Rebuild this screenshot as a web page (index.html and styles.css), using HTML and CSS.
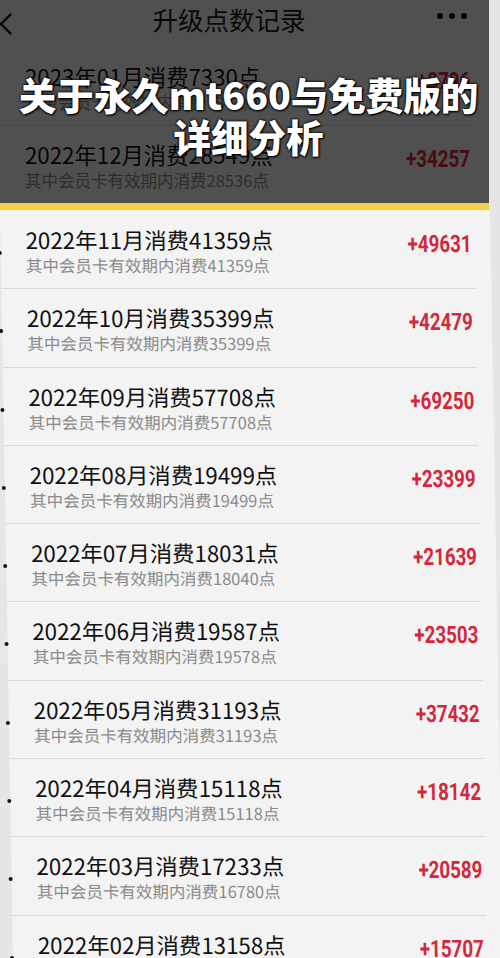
FILE: index.html
```html
<!DOCTYPE html>
<html lang="zh-CN">
<head>
    <meta charset="UTF-8">
    <meta name="viewport" content="width=device-width, initial-scale=1.0">
    <title>升级点数记录</title>
    <link rel="stylesheet" href="styles.css">
</head>
<body>
    <div class="phone">
        <div class="top">
            <div class="header">
                <svg class="back" width="14" height="24" viewBox="0 0 14 24">
                    <polyline points="12,2 2,12 12,22" fill="none" stroke="#111" stroke-width="2.4"/>
                </svg>
                <span class="header-title">升级点数记录</span>
                <span class="more"><i></i><i></i><i></i></span>
            </div>
            <div class="row">
                <div class="info">
                    <p class="month">2023年01月消费7330点</p>
                    <p class="sub">其中会员卡有效期内消费7343点</p>
                </div>
                <span class="points">+8796</span>
            </div>
            <div class="row">
                <div class="info">
                    <p class="month">2022年12月消费28549点</p>
                    <p class="sub">其中会员卡有效期内消费28536点</p>
                </div>
                <span class="points">+34257</span>
            </div>

            <div class="overlay">
                <h1>关于永久mt660与免费版的<br>详细分析</h1>
            </div>
        </div>

        <div class="bar"></div>

        <div class="list">
            <div class="row">
                <div class="info">
                    <p class="month">2022年11月消费41359点</p>
                    <p class="sub">其中会员卡有效期内消费41359点</p>
                </div>
                <span class="points">+49631</span>
            </div>
            <div class="row">
                <div class="info">
                    <p class="month">2022年10月消费35399点</p>
                    <p class="sub">其中会员卡有效期内消费35399点</p>
                </div>
                <span class="points">+42479</span>
            </div>
            <div class="row">
                <div class="info">
                    <p class="month">2022年09月消费57708点</p>
                    <p class="sub">其中会员卡有效期内消费57708点</p>
                </div>
                <span class="points">+69250</span>
            </div>
            <div class="row">
                <div class="info">
                    <p class="month">2022年08月消费19499点</p>
                    <p class="sub">其中会员卡有效期内消费19499点</p>
                </div>
                <span class="points">+23399</span>
            </div>
            <div class="row">
                <div class="info">
                    <p class="month">2022年07月消费18031点</p>
                    <p class="sub">其中会员卡有效期内消费18040点</p>
                </div>
                <span class="points">+21639</span>
            </div>
            <div class="row">
                <div class="info">
                    <p class="month">2022年06月消费19587点</p>
                    <p class="sub">其中会员卡有效期内消费19578点</p>
                </div>
                <span class="points">+23503</span>
            </div>
            <div class="row">
                <div class="info">
                    <p class="month">2022年05月消费31193点</p>
                    <p class="sub">其中会员卡有效期内消费31193点</p>
                </div>
                <span class="points">+37432</span>
            </div>
            <div class="row">
                <div class="info">
                    <p class="month">2022年04月消费15118点</p>
                    <p class="sub">其中会员卡有效期内消费15118点</p>
                </div>
                <span class="points">+18142</span>
            </div>
            <div class="row">
                <div class="info">
                    <p class="month">2022年03月消费17233点</p>
                    <p class="sub">其中会员卡有效期内消费16780点</p>
                </div>
                <span class="points">+20589</span>
            </div>
            <div class="row">
                <div class="info">
                    <p class="month">2022年02月消费13158点</p>
                    <p class="sub">其中会员卡有效期内消费13158点</p>
                </div>
                <span class="points">+15707</span>
            </div>
        </div>
    </div>
</body>
</html>
```

FILE: styles.css
```css
body {
    margin: 0;
    background-color: #e6e6e6;
    font-family: "Noto Sans CJK SC", "Noto Sans", sans-serif;
}
p {
    margin: 0;
}
.phone {
    width: 500px;
    height: 958px;
    overflow: hidden;
    background-color: #e6e6e6;
}
.top {
    position: relative;
    height: 203px;
    overflow: hidden;
    width: 489px;
    background-color: #f3f3f3;
}
.header {
    height: 48px;
    display: flex;
    align-items: flex-start;
    padding-top: 4px;
    box-sizing: border-box;
}
.back {
    margin-top: 8px;
    margin-left: -1px;
}
.header-title {
    flex: 1;
    text-align: center;
    font-size: 25.5px;
    line-height: 30px;
    color: #1a1a1a;
    padding-left: 8px;
}
.more {
    display: flex;
    gap: 6px;
    margin-top: 9px;
    margin-right: 22px;
}
.more i {
    width: 6px;
    height: 6px;
    border-radius: 50%;
    background-color: #111;
}
.overlay {
    position: absolute;
    top: 0;
    left: 0;
    right: 0;
    bottom: 0;
    background-color: rgba(0, 0, 0, 0.67);
    padding-top: 73px;
    box-sizing: border-box;
}
.overlay h1 {
    margin: 0;
    width: 497px;
    text-align: center;
    color: #fff;
    font-size: 37.5px;
    line-height: 42px;
    font-weight: 900;
    text-shadow: 0 0 3px #000, 0 0 2px #000, 1px 1px 2px #000;
}
.bar {
    height: 7px;
    background-color: #f4cf4b;
    border-bottom: 1px solid #fbf3d6;
    width: 489px;
}
.list {
    transform: skewX(1deg);
    transform-origin: 0 0;
    width: 490px;
    background-color: #f3f3f3;
    padding-bottom: 40px;
}
.row {
    position: relative;
    height: 78.3px;
    box-sizing: border-box;
    display: flex;
    align-items: flex-start;
    padding: 14px 3px 0 25px;
    border-bottom: 1px solid #d9d9d9;
    margin-right: 16px;
}
.list .row::before {
    content: "";
    position: absolute;
    left: -3px;
    top: 40px;
    width: 4px;
    height: 4px;
    border-radius: 50%;
    background-color: #111;
}
.info {
    flex: 1;
}
.month {
    font-size: 22.3px;
    line-height: 28px;
    color: #111;
}
.sub {
    margin-top: 0;
    font-size: 16.5px;
    line-height: 24px;
    color: #8a8a8a;
}
.points {
    margin-top: 4px;
    font-family: Roboto, "Liberation Sans", sans-serif;
    font-weight: 700;
    font-size: 24px;
    line-height: 30px;
    color: #d3283c;
    transform: scaleX(0.78);
    transform-origin: right center;
}
```
